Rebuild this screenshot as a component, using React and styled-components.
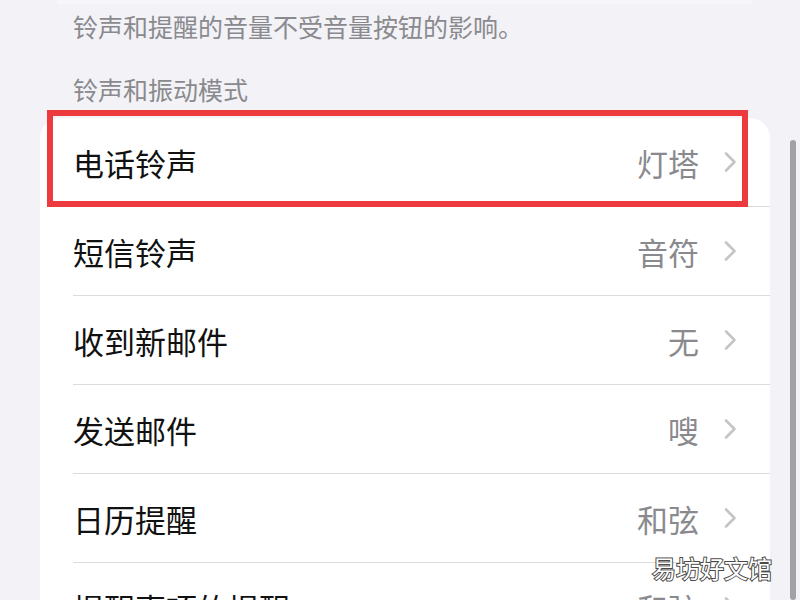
import styled, { createGlobalStyle } from 'styled-components'

const GlobalStyle = createGlobalStyle`
    html, body {
        margin: 0;
        padding: 0;
        background-color: #f2f2f7;
    }
    body {
        font-family: "Noto Sans CJK SC", "Noto Sans", sans-serif;
    }
`

const rows = [
    { label: '电话铃声', value: '灯塔', marked: true },
    { label: '短信铃声', value: '音符' },
    { label: '收到新邮件', value: '无' },
    { label: '发送邮件', value: '嗖' },
    { label: '日历提醒', value: '和弦' },
    { label: '提醒事项的提醒', value: '和弦' },
]

function Chevron () {
    return (
        <svg width="14" height="22" viewBox="0 0 14 22">
            <polyline points="3,2.5 11.5,11 3,19.5" fill="none" stroke="#c5c5c8" strokeWidth="2.6" strokeLinecap="round" strokeLinejoin="round" />
        </svg>
    )
}

export default function App () {
    return (
        <Page>
            <GlobalStyle />
            <PrevCardEdge />
            <Footnote>铃声和提醒的音量不受音量按钮的影响。</Footnote>
            <SectionTitle>铃声和振动模式</SectionTitle>
            <Card>
                {rows.map((row) => (
                    <Row key={row.label}>
                        {row.marked && <Highlight />}
                        <RowInner>
                            <Label>{row.label}</Label>
                            <Value>{row.value}</Value>
                            <Chevron />
                        </RowInner>
                    </Row>
                ))}
            </Card>
            <ScrollBar />
            <Watermark>易坊好文馆</Watermark>
        </Page>
    )
}

const Page = styled.div`
    position: relative;
    width: 800px;
    height: 600px;
    overflow: hidden;
    background-color: #f2f2f7;
`

const PrevCardEdge = styled.div`
    height: 4px;
    margin-left: 57px;
    width: 695px;
    background-color: #f7f7fa;
    border-radius: 0 0 3px 3px;
`

const Footnote = styled.p`
    margin: 0;
    padding: 5px 0 0 73px;
    font-size: 25px;
    line-height: 34px;
    color: #8a8a8e;
`

const SectionTitle = styled.p`
    margin: 29px 0 0 0;
    padding-left: 73px;
    font-size: 25px;
    line-height: 34px;
    color: #8a8a8e;
`

const Card = styled.div`
    margin: 12px 0 0 40px;
    width: 730px;
    background-color: #ffffff;
    border-radius: 20px 20px 0 0;
`

const Row = styled.div`
    position: relative;
    padding-left: 33px;
`

const RowInner = styled.div`
    display: flex;
    align-items: center;
    height: 88px;
    padding-right: 33px;
    border-bottom: 1px solid #dcdcde;
`

const Label = styled.span`
    flex: 1;
    font-size: 31px;
    color: #111111;
`

const Value = styled.span`
    font-size: 31px;
    color: #8a8a8e;
    margin-right: 24px;
`

const Highlight = styled.div`
    position: absolute;
    left: 7px;
    top: -8px;
    width: 689px;
    height: 85px;
    border: 6px solid #ec3a3e;
    pointer-events: none;
`

const ScrollBar = styled.div`
    position: absolute;
    right: 4px;
    top: 140px;
    bottom: 0;
    width: 6px;
    border-radius: 3px;
    background-color: #a2a2a6;
`

const Watermark = styled.div`
    position: absolute;
    left: 652px;
    top: 550px;
    font-size: 24px;
    line-height: 36px;
    color: #ffffff;
    -webkit-text-stroke: 2px #4a4a4a;
    paint-order: stroke fill;
`
